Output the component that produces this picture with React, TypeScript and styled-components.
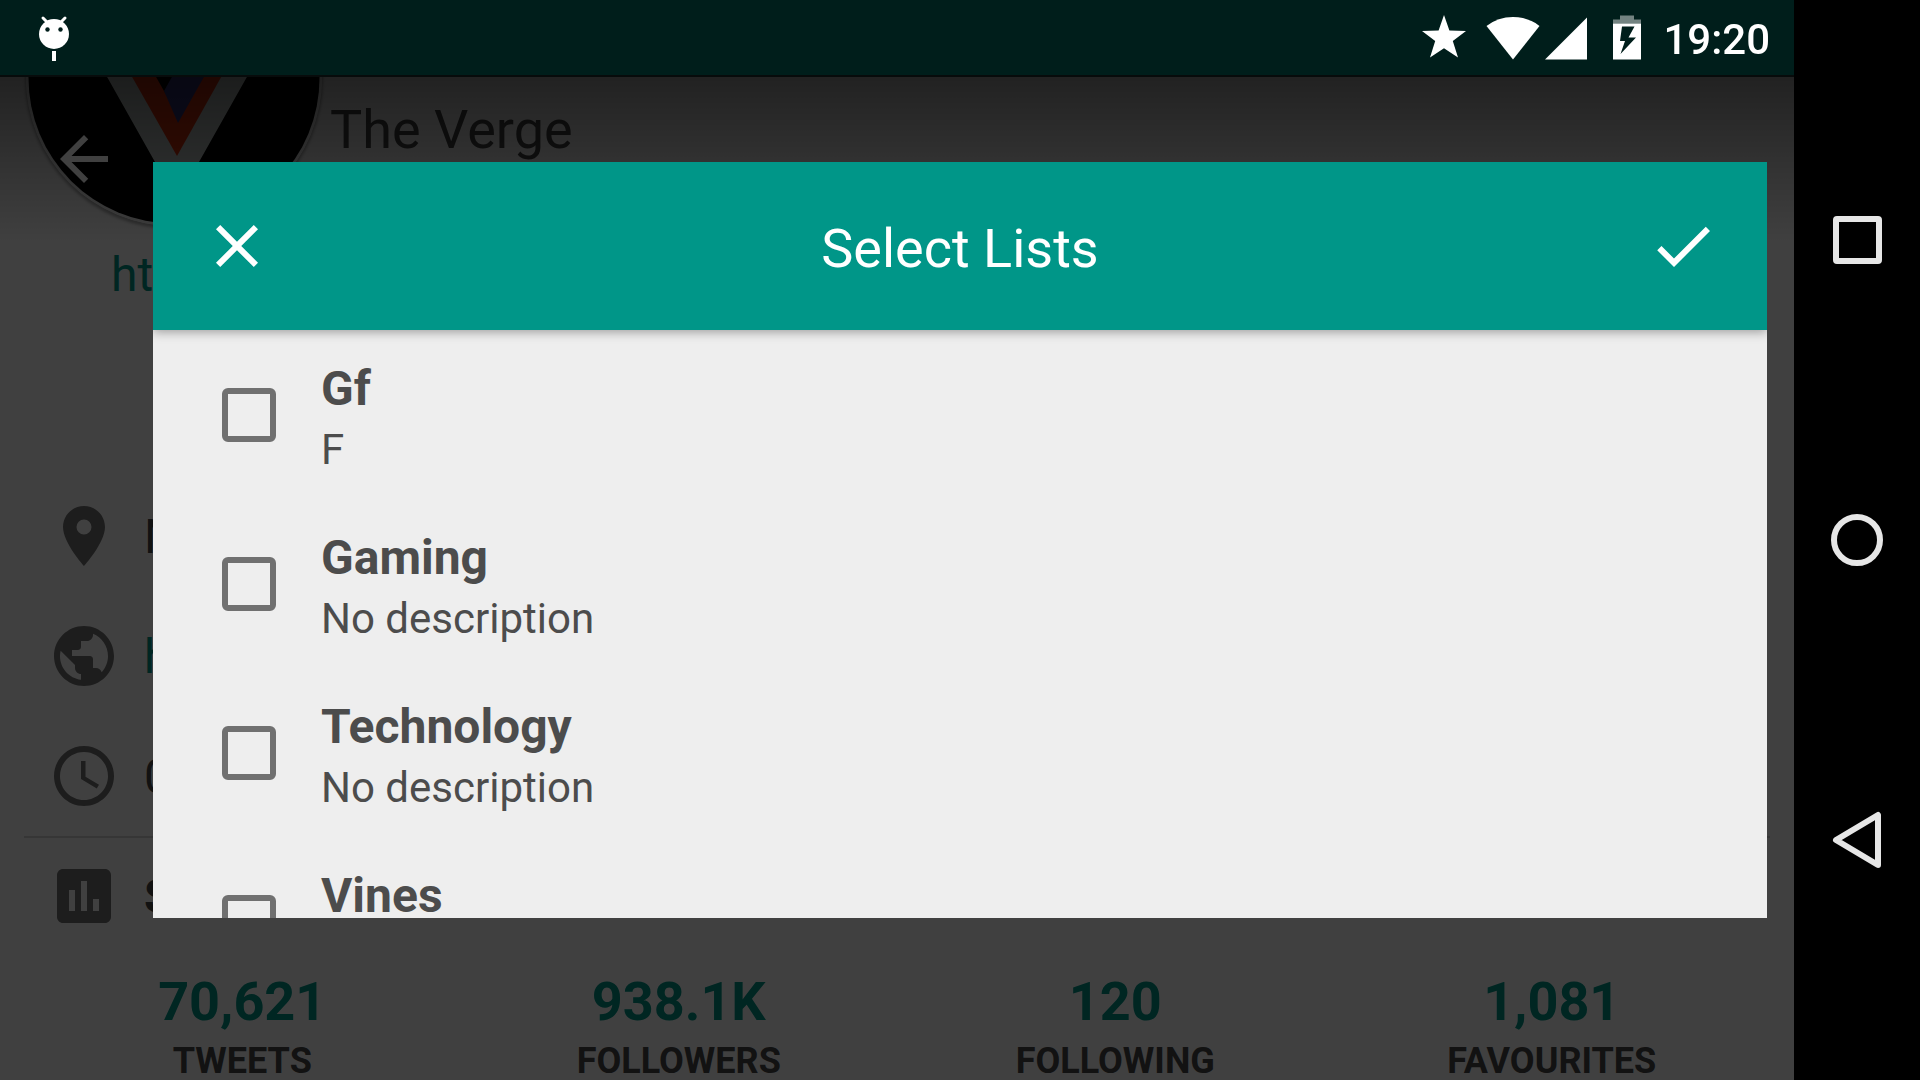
import React from "react";
import styled, { createGlobalStyle } from "styled-components";

const teal = "#009688";

const GlobalStyle = createGlobalStyle`
  * { box-sizing: border-box; }
  body {
    margin: 0;
    background: #000;
    font-family: Roboto, "Noto Sans", sans-serif;
    overflow: hidden;
  }
  button { border: 0; padding: 0; background: none; font: inherit; color: inherit; cursor: pointer; }
  h1, h2, p, ul, dl, dt, dd { margin: 0; padding: 0; font-weight: inherit; }
`;

const Device = styled.div`
  display: grid;
  grid-template-columns: minmax(0, 1fr) 126px;
  height: 100vh;
`;

const Screen = styled.div`
  display: flex;
  flex-direction: column;
  min-height: 0;
  overflow: hidden;
  background: #fff;
`;

const StatusBar = styled.header`
  position: relative;
  z-index: 2;
  display: flex;
  align-items: center;
  flex: none;
  height: 75px;
  padding: 0 24px 0 30px;
  background: #001e1b;
  color: #fff;
  box-shadow: 0 2px 0 #070b0b;
`;

const StatusIcons = styled.div`
  display: flex;
  align-items: center;
  margin-left: auto;
`;

const Clock = styled.time`
  margin-left: 21px;
  padding-top: 4px;
  font-size: 42px;
  line-height: 48px;
  font-weight: 500;
`;

const StatusGlyph = styled.svg<{ $w: number; $gap?: number }>`
  display: block;
  width: ${(p) => p.$w}px;
  height: 48px;
  margin-left: ${(p) => p.$gap ?? 0}px;
  fill: currentColor;
`;

const Profile = styled.main`
  position: relative;
  flex: 1;
  min-height: 0;
  overflow: hidden;
  color: #484848;
`;

const ProfileToolbar = styled.div`
  position: absolute;
  inset: 0 0 auto;
  display: flex;
  align-items: center;
  height: 168px;
  padding: 0 48px;
  color: #fff;
  background: linear-gradient(rgba(0, 0, 0, 0.48), rgba(0, 0, 0, 0));
`;

const IconButton = styled.button`
  display: block;
  flex: none;
  width: 72px;
  height: 72px;
`;

const Icon = styled.svg`
  display: block;
  flex: none;
  width: 72px;
  height: 72px;
  fill: currentColor;
`;

const ProfileHead = styled.div`
  display: flex;
  align-items: center;
  gap: 8px;
  margin-top: -145px;
  padding-left: 26px;
`;

const Avatar = styled.svg`
  display: block;
  width: 296px;
  height: 296px;
  border-radius: 50%;
  box-shadow: 0 2px 3px 1px rgba(0, 0, 0, 0.3);
`;

const Name = styled.h1`
  padding-top: 104px;
  font-size: 54px;
  line-height: 64px;
`;

const Website = styled.a`
  display: block;
  margin: 19px 0 0 111px;
  font-size: 48px;
  line-height: 60px;
  color: ${teal};
  text-decoration: none;
`;

const InfoList = styled.ul`
  list-style: none;
  margin-top: 171px;
`;

const InfoRow = styled.li<{ $strong?: boolean }>`
  display: flex;
  align-items: center;
  gap: 24px;
  height: 120px;
  padding-left: 48px;
  font-size: 48px;
  line-height: 60px;
  font-weight: ${(p) => (p.$strong ? 700 : 400)};
  > svg { color: #757575; }
  > a, > span { padding-top: 2px; }
  > a { color: ${teal}; text-decoration: none; }
`;

const Section = styled.section`
  margin: 0 24px;
  border-top: 2px solid #d8d8d8;
  ${InfoRow} {
    margin-left: -24px;
    height: 116px;
  }
`;

const Stats = styled.dl`
  display: grid;
  grid-template-columns: repeat(4, 1fr);
  margin-top: 15px;
  text-align: center;
`;

const Stat = styled.div`
  display: flex;
  flex-direction: column-reverse;
  gap: 8px;
  font-weight: 700;
  dt { font-size: 36px; line-height: 36px; text-transform: uppercase; }
  dd { font-size: 54px; line-height: 66px; color: ${teal}; }
`;

const Scrim = styled.div`
  position: fixed;
  inset: 0;
  z-index: 1;
  display: flex;
  padding: 162px 153px;
  background: rgba(0, 0, 0, 0.75);
`;

const Dialog = styled.section`
  display: flex;
  flex-direction: column;
  flex: 1;
  min-height: 0;
  overflow: hidden;
  background: #eee;
`;

const DialogBar = styled.header`
  position: relative;
  display: flex;
  align-items: center;
  justify-content: space-between;
  flex: none;
  height: 168px;
  padding: 0 48px;
  background: ${teal};
  color: #fff;
  box-shadow: 0 2px 10px rgba(0, 0, 0, 0.35);
`;

const DialogTitle = styled.h2`
  padding-top: 6px;
  font-size: 54px;
  line-height: 64px;
`;

const Options = styled.ul`
  list-style: none;
  min-height: 0;
  overflow: hidden;
`;

const Option = styled.label`
  display: flex;
  align-items: center;
  gap: 45px;
  height: 169px;
  padding-left: 69px;
  color: #4c4c4c;
  cursor: pointer;
`;

const Tick = styled.input`
  appearance: none;
  flex: none;
  width: 54px;
  height: 54px;
  margin: 0;
  border: 6px solid #707070;
  border-radius: 6px;
  &:checked { background: ${teal}; border-color: ${teal}; }
`;

const OptionText = styled.span`
  display: flex;
  flex-direction: column;
  padding-top: 8px;
`;

const OptionName = styled.span`
  font-size: 48px;
  line-height: 62px;
  font-weight: 700;
`;

const OptionNote = styled.span`
  font-size: 42px;
  line-height: 60px;
`;

const NavBar = styled.nav`
  position: relative;
  z-index: 2;
  display: flex;
  flex-direction: column;
  justify-content: center;
  background: #000;
  color: #e6e6e6;
`;

const NavButton = styled.button`
  display: grid;
  place-items: center;
  flex: 0 1 300px;
  svg {
    display: block;
    width: 60px;
    height: 60px;
    fill: none;
    stroke: currentColor;
    stroke-width: 6;
    stroke-linejoin: round;
  }
`;

const paths = {
  back: "M20 11H7.83l5.59-5.59L12 4l-8 8 8 8 1.41-1.41L7.83 13H20v-2z",
  close: "M19 6.41L17.59 5 12 10.59 6.41 5 5 6.41 10.59 12 5 17.59 6.41 19 12 13.41 17.59 19 19 17.59 13.41 12z",
  check: "M9 16.17L4.83 12l-1.42 1.41L9 19 21 7l-1.41-1.41z",
  place: "M12 2C8.13 2 5 5.13 5 9c0 5.25 7 13 7 13s7-7.75 7-13c0-3.87-3.13-7-7-7zm0 9.5a2.5 2.5 0 0 1 0-5 2.5 2.5 0 0 1 0 5z",
  globe: "M12 2C6.48 2 2 6.48 2 12s4.48 10 10 10 10-4.48 10-10S17.52 2 12 2zm-1 17.93c-3.95-.49-7-3.85-7-7.93 0-.62.08-1.21.21-1.79L9 15v1c0 1.1.9 2 2 2v1.93zm6.9-2.54c-.26-.81-1-1.39-1.9-1.39h-1v-3c0-.55-.45-1-1-1H8v-2h2c.55 0 1-.45 1-1V7h2c1.1 0 2-.9 2-2v-.41c2.93 1.19 5 4.06 5 7.41 0 2.08-.8 3.97-2.1 5.39z",
  clock: "M11.99 2C6.47 2 2 6.48 2 12s4.47 10 9.99 10C17.52 22 22 17.52 22 12S17.52 2 11.99 2zM12 20c-4.42 0-8-3.58-8-8s3.58-8 8-8 8 3.58 8 8-3.58 8-8 8zm.5-13H11v6l5.25 3.15.75-1.23-4.5-2.67z",
  stats: "M19 3H5c-1.1 0-2 .9-2 2v14c0 1.1.9 2 2 2h14c1.1 0 2-.9 2-2V5c0-1.1-.9-2-2-2zM9 17H7v-7h2v7zm4 0h-2V7h2v10zm4 0h-2v-4h2v4z",
};

function Glyph({ name }: { name: keyof typeof paths }) {
  return (
    <Icon viewBox="0 0 24 24" aria-hidden="true">
      <path d={paths[name]} />
    </Icon>
  );
}

const lists = [
  { name: "Gf", note: "F" },
  { name: "Gaming", note: "No description" },
  { name: "Technology", note: "No description" },
  { name: "Vines", note: "No description" },
];

const stats = [
  { label: "Tweets", value: "70,621" },
  { label: "Followers", value: "938.1K" },
  { label: "Following", value: "120" },
  { label: "Favourites", value: "1,081" },
];

export default function App() {
  return (
    <Device>
      <GlobalStyle />
      <Screen>
        <StatusBar>
          <StatusGlyph $w={48} viewBox="0 0 48 48" aria-hidden="true">
            <path d="M13 4L18 9M35 4L30 9" stroke="currentColor" strokeWidth="3" strokeLinecap="round" />
            <circle cx="24" cy="20" r="15" />
            <circle cx="17.5" cy="15.5" r="2.2" fill="#001e1b" />
            <circle cx="30.5" cy="15.5" r="2.2" fill="#001e1b" />
            <path d="M22 37h4v10h-4z" />
          </StatusGlyph>
          <StatusIcons>
            <StatusGlyph $w={46} viewBox="0 0 46 48" aria-hidden="true">
              <path d="M23 1l5.4 15.6 16.6.4L31.8 27l5.2 16.5L23 34.3 9 43.5 14.2 27 1 17l16.6-.4z" />
            </StatusGlyph>
            <StatusGlyph $w={54} $gap={19} viewBox="0 0 54 48" aria-hidden="true">
              <path d="M.5 12Q12 3 27 3t26.500 9L27 45.500z" />
            </StatusGlyph>
            <StatusGlyph $w={42} $gap={5} viewBox="0 0 42 48" aria-hidden="true">
              <path d="M42 3.500V45.500H0z" />
            </StatusGlyph>
            <StatusGlyph $w={30} $gap={25} viewBox="0 0 30 48" aria-hidden="true">
              <path d="M8 1.500h14v4h7v4H1v-4h7z" opacity="0.45" />
              <path fillRule="evenodd" d="M1 9.500h28v36H1zM10 12.500L8 27h5L8.500 40 24 23.500h-7.500L22.500 12.500z" />
            </StatusGlyph>
            <Clock>19:20</Clock>
          </StatusIcons>
        </StatusBar>

        <Profile>
          <ProfileHead>
            <Avatar viewBox="-1 -1 296 296" role="img" aria-label="The Verge">
              <circle cx="147" cy="147" r="148" fill="#f0f0f0" />
              <circle cx="147" cy="147" r="145.500" fill="#000" />
              <path d="M57 105L128 231 142 256H158L172 231 243 105z" fill="#d4dcda" />
              <path d="M83 107L150 225 216 107z" fill="#e8360f" />
              <path d="M128 144L150 183 172 144z" fill="#000" />
              <path d="M146 144H178L151 192 137 160z" fill="#3c3c8c" />
            </Avatar>
            <Name>The Verge</Name>
          </ProfileHead>
          <Website href="#website">http://www.theverge.com</Website>
          <InfoList>
            <InfoRow><Glyph name="place" /><span>New York</span></InfoRow>
            <InfoRow><Glyph name="globe" /><a href="#site">http://t.co</a></InfoRow>
            <InfoRow><Glyph name="clock" /><span>06 Jun</span></InfoRow>
          </InfoList>
          <Section>
            <InfoRow as="div" $strong><Glyph name="stats" /><span>Stats</span></InfoRow>
            <Stats>
              {stats.map((s) => (
                <Stat key={s.label}>
                  <dt>{s.label}</dt>
                  <dd>{s.value}</dd>
                </Stat>
              ))}
            </Stats>
          </Section>
          <ProfileToolbar>
            <IconButton aria-label="Back"><Glyph name="back" /></IconButton>
          </ProfileToolbar>
        </Profile>
      </Screen>

      <NavBar>
        <NavButton aria-label="Recent apps">
          <svg viewBox="0 0 60 60"><rect x="9" y="9" width="43" height="42" rx="1" /></svg>
        </NavButton>
        <NavButton aria-label="Home">
          <svg viewBox="0 0 60 60"><circle cx="30" cy="30" r="23" /></svg>
        </NavButton>
        <NavButton aria-label="Go back">
          <svg viewBox="0 0 60 60"><path d="M9 30L51 5V55z" /></svg>
        </NavButton>
      </NavBar>

      <Scrim>
        <Dialog role="dialog" aria-modal="true" aria-labelledby="dialog-title">
          <DialogBar>
            <IconButton aria-label="Close"><Glyph name="close" /></IconButton>
            <DialogTitle id="dialog-title">Select Lists</DialogTitle>
            <IconButton aria-label="Done"><Glyph name="check" /></IconButton>
          </DialogBar>
          <Options>
            {lists.map((l) => (
              <li key={l.name}>
                <Option>
                  <Tick type="checkbox" name={l.name} />
                  <OptionText>
                    <OptionName>{l.name}</OptionName>
                    <OptionNote>{l.note}</OptionNote>
                  </OptionText>
                </Option>
              </li>
            ))}
          </Options>
        </Dialog>
      </Scrim>
    </Device>
  );
}
